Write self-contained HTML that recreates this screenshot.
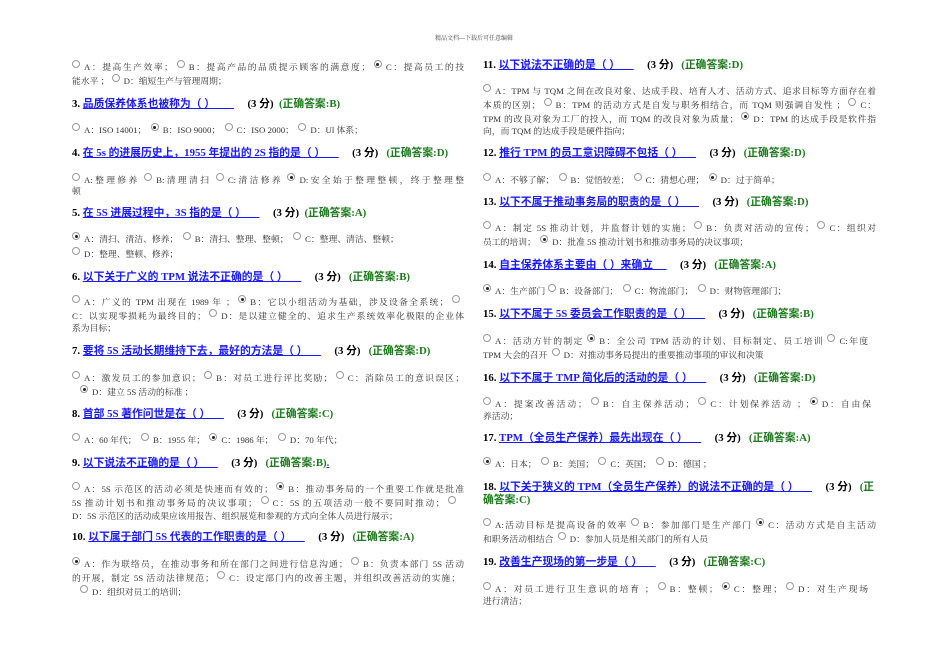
<!DOCTYPE html>
<html><head><meta charset="utf-8">
<style>
body{margin:0;width:950px;height:672px;background:#fff;position:relative;overflow:hidden;font-family:"Liberation Serif","Noto Serif CJK SC",serif;}
.l{position:absolute;white-space:nowrap;font-size:8.8px;color:#333;line-height:12px;}
.j{text-align:justify;text-align-last:justify;}
.q{position:absolute;white-space:nowrap;font-size:10.8px;font-weight:bold;line-height:14px;color:#000;font-family:"Liberation Serif","Noto Sans CJK SC",serif;}
.q u{color:#1a1aff;text-decoration:underline;text-decoration-color:#1a1aff;}
.q .g{color:#1c7a1c;}
.r{display:inline-block;width:6px;height:6px;border:1px solid #999;border-radius:50%;vertical-align:2px;margin:0 4px 0 0;position:relative;background:#fff;}
.r.c::after{content:"";position:absolute;left:1.5px;top:1.5px;width:3px;height:3px;border-radius:50%;background:#222;}
.h{position:absolute;left:435px;top:33px;font-size:6px;color:#444;}
</style></head><body>
<div class="h">精品文档---下载后可任意编辑</div>

<!-- LEFT -->
<div class="l j" style="left:72px;top:60px;width:392px"><span class="r"></span>A：提高生产效率； <span class="r"></span>B：提高产品的品质提示顾客的满意度； <span class="r c"></span>C：提高员工的技</div>
<div class="l" style="left:72px;top:74px">能水平 ； <span class="r"></span>D：缩短生产与管理周期；</div>
<div class="q" style="left:72px;top:97px">3. <u>品质保养体系也被称为（ ）&nbsp;&nbsp;&nbsp;&nbsp;&nbsp;&nbsp;&nbsp;</u>&nbsp;&nbsp;&nbsp;&nbsp; (3 分) &nbsp;<span class="g">(正确答案:B)</span></div>
<div class="l" style="left:72px;top:123px"><span class="r"></span>A：ISO 14001； &nbsp;<span class="r c"></span>B：ISO 9000； &nbsp;<span class="r"></span>C：ISO 2000； &nbsp;<span class="r"></span>D：Ul 体系；</div>
<div class="q" style="left:72px;top:146px">4. <u>在 5s 的进展历史上，1955 年提出的 2S 指的是（ ）&nbsp;&nbsp;&nbsp;&nbsp;&nbsp;</u>&nbsp;&nbsp;&nbsp;&nbsp; (3 分) &nbsp;&nbsp;<span class="g">(正确答案:D)</span></div>
<div class="l j" style="left:72px;top:173px;width:392px"><span class="r"></span>A:整理修养 <span class="r"></span>B:清理清扫 <span class="r"></span>C:清洁修养 <span class="r c"></span>D:安全始于整理整顿，终于整理整</div>
<div class="l" style="left:72px;top:185px">顿</div>
<div class="q" style="left:72px;top:206px">5. <u>在 5S 进展过程中，3S 指的是（ ）&nbsp;&nbsp;&nbsp;&nbsp;&nbsp;</u>&nbsp;&nbsp;&nbsp;&nbsp; (3 分) &nbsp;<span class="g">(正确答案:A)</span></div>
<div class="l" style="left:72px;top:232px"><span class="r c"></span>A：清扫、清洁、修养； &nbsp;<span class="r"></span>B：清扫、整理、整顿； &nbsp;<span class="r"></span>C：整理、清洁、整顿；</div>
<div class="l" style="left:72px;top:247px"><span class="r"></span>D：整理、整顿、修养；</div>
<div class="q" style="left:72px;top:270px">6. <u>以下关于广义的 TPM 说法不正确的是（ ）&nbsp;&nbsp;&nbsp;&nbsp;&nbsp;</u>&nbsp;&nbsp;&nbsp;&nbsp; (3 分) &nbsp;&nbsp;<span class="g">(正确答案:B)</span></div>
<div class="l j" style="left:72px;top:295px;width:392px"><span class="r"></span>A：广义的 TPM 出现在 1989 年 ； <span class="r c"></span>B：它以小组活动为基础，涉及设备全系统； <span class="r"></span></div>
<div class="l j" style="left:72px;top:309px;width:392px">C：以实现零损耗为最终目的； <span class="r"></span>D：是以建立健全的、追求生产系统效率化极限的企业体</div>
<div class="l" style="left:72px;top:322px">系为目标；</div>
<div class="q" style="left:72px;top:344px">7. <u>要将 5S 活动长期维持下去，最好的方法是（ ）&nbsp;&nbsp;&nbsp;&nbsp;&nbsp;</u>&nbsp;&nbsp;&nbsp;&nbsp; (3 分) &nbsp;&nbsp;<span class="g">(正确答案:D)</span></div>
<div class="l j" style="left:72px;top:371px;width:392px"><span class="r"></span>A：激发员工的参加意识； <span class="r"></span>B：对员工进行评比奖励； <span class="r"></span>C：消除员工的意识误区；</div>
<div class="l" style="left:80px;top:385px"><span class="r c"></span>D：建立 5S 活动的标准 ；</div>
<div class="q" style="left:72px;top:407px">8. <u>首部 5S 著作问世是在（ ）&nbsp;&nbsp;&nbsp;&nbsp;&nbsp;</u>&nbsp;&nbsp;&nbsp;&nbsp; (3 分) &nbsp;&nbsp;<span class="g">(正确答案:C)</span></div>
<div class="l" style="left:72px;top:433px"><span class="r"></span>A：60 年代； &nbsp;<span class="r"></span>B：1955 年； &nbsp;<span class="r c"></span>C：1986 年； &nbsp;<span class="r"></span>D：70 年代；</div>
<div class="q" style="left:72px;top:456px">9. <u>以下说法不正确的是（ ）&nbsp;&nbsp;&nbsp;&nbsp;&nbsp;</u>&nbsp;&nbsp;&nbsp;&nbsp; (3 分) &nbsp;&nbsp;<span class="g">(正确答案:B)<u style="color:#1c7a1c">.</u></span></div>
<div class="l j" style="left:72px;top:482px;width:392px"><span class="r"></span>A：5S 示范区的活动必须是快速而有效的； <span class="r c"></span>B：推动事务局的一个重要工作就是批准</div>
<div class="l j" style="left:72px;top:496px;width:388px">5S 推动计划书和推动事务局的决议事项； <span class="r"></span>C：5S 的五项活动一般不要同时推动； <span class="r"></span></div>
<div class="l" style="left:72px;top:510px">D：5S 示范区的活动成果应该用报告、组织展览和参观的方式向全体人员进行展示；</div>
<div class="q" style="left:72px;top:530px">10. <u>以下属于部门 5S 代表的工作职责的是（ ）&nbsp;&nbsp;&nbsp;&nbsp;&nbsp;</u>&nbsp;&nbsp;&nbsp;&nbsp; (3 分) &nbsp;&nbsp;<span class="g">(正确答案:A)</span></div>
<div class="l j" style="left:72px;top:557px;width:392px"><span class="r c"></span>A：作为联络员，在推动事务和所在部门之间进行信息沟通； <span class="r"></span>B：负责本部门 5S 活动</div>
<div class="l j" style="left:72px;top:571px;width:388px">的开展，制定 5S 活动法律规范； <span class="r"></span>C：设定部门内的改善主题，并组织改善活动的实施；</div>
<div class="l" style="left:80px;top:585px"><span class="r"></span>D：组织对员工的培训；</div>

<!-- RIGHT -->
<div class="q" style="left:483px;top:58px">11. <u>以下说法不正确的是（ ）&nbsp;&nbsp;&nbsp;&nbsp;&nbsp;</u>&nbsp;&nbsp;&nbsp;&nbsp; (3 分) &nbsp;&nbsp;<span class="g">(正确答案:D)</span></div>
<div class="l j" style="left:483px;top:84px;width:393px"><span class="r"></span>A：TPM 与 TQM 之间在改良对象、达成手段、培育人才、活动方式、追求目标等方面存在着</div>
<div class="l j" style="left:483px;top:98px;width:393px">本质的区别； <span class="r"></span>B：TPM 的活动方式是自发与职务相结合，而 TQM 则强调自发性 ； <span class="r"></span>C：</div>
<div class="l j" style="left:483px;top:112px;width:393px">TPM 的改良对象为工厂的投入，而 TQM 的改良对象为质量； <span class="r c"></span>D：TPM 的达成手段是软件指</div>
<div class="l" style="left:483px;top:125px">向，而 TQM 的达成手段是硬件指向；</div>
<div class="q" style="left:483px;top:146px">12. <u>推行 TPM 的员工意识障碍不包括（ ）&nbsp;&nbsp;&nbsp;&nbsp;&nbsp;</u>&nbsp;&nbsp;&nbsp;&nbsp; (3 分) &nbsp;&nbsp;<span class="g">(正确答案:D)</span></div>
<div class="l" style="left:483px;top:173px"><span class="r"></span>A：不够了解； &nbsp;<span class="r"></span>B：觉悟较差； &nbsp;<span class="r"></span>C：猜想心理； &nbsp;<span class="r c"></span>D：过于简单；</div>
<div class="q" style="left:483px;top:195px">13. <u>以下不属于推动事务局的职责的是（ ）&nbsp;&nbsp;&nbsp;&nbsp;&nbsp;</u>&nbsp;&nbsp;&nbsp;&nbsp; (3 分) &nbsp;&nbsp;<span class="g">(正确答案:D)</span></div>
<div class="l j" style="left:483px;top:221px;width:393px"><span class="r"></span>A：制定 5S 推动计划，并监督计划的实施； <span class="r"></span>B：负责对活动的宣传； <span class="r"></span>C：组织对</div>
<div class="l" style="left:483px;top:235px">员工的培训； &nbsp;<span class="r c"></span>D：批准 5S 推动计划书和推动事务局的决议事项；</div>
<div class="q" style="left:483px;top:258px">14. <u>自主保养体系主要由（ ）来确立&nbsp;&nbsp;&nbsp;&nbsp;&nbsp;</u>&nbsp;&nbsp;&nbsp;&nbsp; (3 分) &nbsp;&nbsp;<span class="g">(正确答案:A)</span></div>
<div class="l" style="left:483px;top:284px"><span class="r c"></span>A：生产部门 <span class="r"></span>B：设备部门； &nbsp;<span class="r"></span>C：物流部门； &nbsp;<span class="r"></span>D：财物管理部门；</div>
<div class="q" style="left:483px;top:307px">15. <u>以下不属于 5S 委员会工作职责的是（ ）&nbsp;&nbsp;&nbsp;&nbsp;&nbsp;</u>&nbsp;&nbsp;&nbsp;&nbsp; (3 分) &nbsp;&nbsp;<span class="g">(正确答案:B)</span></div>
<div class="l j" style="left:483px;top:334px;width:385px"><span class="r"></span>A：活动方针的制定 <span class="r c"></span>B：全公司 TPM 活动的计划、目标制定、员工培训 <span class="r"></span>C:年度</div>
<div class="l" style="left:483px;top:348px">TPM 大会的召开 &nbsp;<span class="r"></span>D：对推动事务局提出的重要推动事项的审议和决策</div>
<div class="q" style="left:483px;top:371px">16. <u>以下不属于 TMP 简化后的活动的是（ ）&nbsp;&nbsp;&nbsp;&nbsp;&nbsp;</u>&nbsp;&nbsp;&nbsp;&nbsp; (3 分) &nbsp;&nbsp;<span class="g">(正确答案:D)</span></div>
<div class="l j" style="left:483px;top:397px;width:388px"><span class="r"></span>A：提案改善活动； <span class="r"></span>B：自主保养活动； <span class="r"></span>C：计划保养活动 ； <span class="r c"></span>D：自由保</div>
<div class="l" style="left:483px;top:410px">养活动；</div>
<div class="q" style="left:483px;top:431px">17. <u>TPM（全员生产保养）最先出现在（ ）&nbsp;&nbsp;&nbsp;&nbsp;&nbsp;</u>&nbsp;&nbsp;&nbsp;&nbsp; (3 分) &nbsp;&nbsp;<span class="g">(正确答案:A)</span></div>
<div class="l" style="left:483px;top:457px"><span class="r c"></span>A：日本； &nbsp;<span class="r"></span>B：美国； &nbsp;<span class="r"></span>C：英国； &nbsp;<span class="r"></span>D：德国 ；</div>
<div class="q" style="left:483px;top:480px">18. <u>以下关于狭义的 TPM（全员生产保养）的说法不正确的是（ ）&nbsp;&nbsp;&nbsp;&nbsp;&nbsp;</u>&nbsp;&nbsp;&nbsp;&nbsp; (3 分) &nbsp;&nbsp;<span class="g">(正</span></div>
<div class="q" style="left:483px;top:493px"><span class="g">确答案:C)</span></div>
<div class="l j" style="left:483px;top:518px;width:393px"><span class="r"></span>A:活动目标是提高设备的效率 <span class="r"></span>B：参加部门是生产部门 <span class="r c"></span>C：活动方式是自主活动</div>
<div class="l" style="left:483px;top:532px">和职务活动相结合 &nbsp;<span class="r"></span>D：参加人员是相关部门的所有人员</div>
<div class="q" style="left:483px;top:555px">19. <u>改善生产现场的第一步是（ ）&nbsp;&nbsp;&nbsp;&nbsp;&nbsp;</u>&nbsp;&nbsp;&nbsp;&nbsp; (3 分) &nbsp;&nbsp;<span class="g">(正确答案:C)</span></div>
<div class="l j" style="left:483px;top:582px;width:385px"><span class="r"></span>A：对员工进行卫生意识的培育 ； <span class="r"></span>B：整顿； <span class="r c"></span>C：整理； <span class="r"></span>D：对生产现场</div>
<div class="l" style="left:483px;top:595px">进行清洁；</div>
</body></html>
